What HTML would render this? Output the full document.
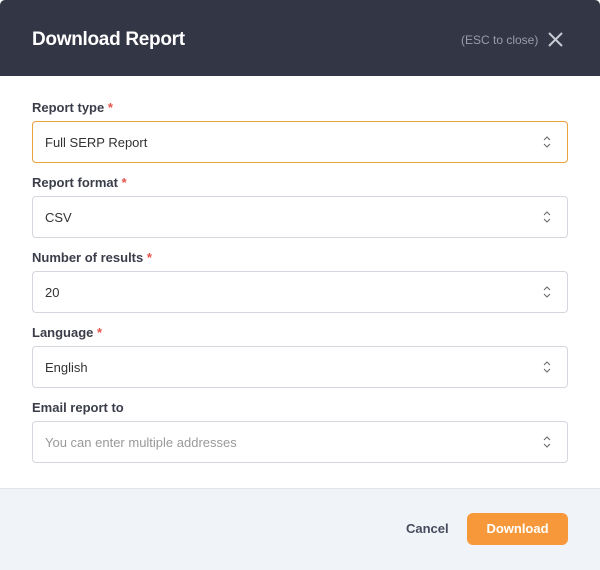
<!DOCTYPE html>
<html><head><style>
*{box-sizing:border-box;margin:0;padding:0}
body{width:600px;height:570px;background:#fff;font-family:"Liberation Sans",sans-serif;overflow:hidden;position:relative}
.hd{position:absolute;left:0;top:0;width:600px;height:76px;background:#333645;border-radius:5px 5px 0 0}
.hd h1{position:absolute;left:32px;top:29px;font-size:19px;font-weight:bold;color:#fff;letter-spacing:-0.3px}
.esc{position:absolute;left:461px;top:33px;font-size:12px;color:#9a9ca8}
.x{position:absolute;left:547px;top:31px}
.lbl{position:absolute;left:32px;font-size:13px;font-weight:bold;color:#3b3e4a}
.lbl span{color:#e5534b}
.f{position:absolute;left:32px;width:536px;height:42px;border:1px solid #d4d7dd;border-radius:4px;font-size:13px;color:#333;padding:13px 12px}
.f.a{border-color:#e8a33d}
.f.p{color:#999}
.f svg{position:absolute;right:16px;top:14px}
.ft{position:absolute;left:0;top:488px;width:600px;height:82px;background:#f0f3f7;border-top:1px solid #e2e5ea}
.cn{position:absolute;left:406px;top:521px;font-size:13px;font-weight:bold;color:#464b5e}
.dl{position:absolute;left:467px;top:513px;width:101px;height:32px;background:#f7993a;border-radius:6px;color:#fff;font-size:13px;font-weight:bold;text-align:center;line-height:32px}
</style></head><body>
<div class="hd"><h1>Download Report</h1><div class="esc">(ESC to close)</div>
<svg class="x" width="17" height="17" viewBox="0 0 17 17"><path d="M2 2L15 15M15 2L2 15" stroke="#c9cbd3" stroke-width="2"/></svg></div>

<div class="lbl" style="top:100px">Report type <span>*</span></div>
<div class="f a" style="top:121px">Full SERP Report<svg width="8" height="12" viewBox="0 0 8 12"><path d="M1 4L4 1L7 4M1 8L4 11L7 8" stroke="#666" fill="none"/></svg></div>
<div class="lbl" style="top:175px">Report format <span>*</span></div>
<div class="f" style="top:196px">CSV<svg width="8" height="12" viewBox="0 0 8 12"><path d="M1 4L4 1L7 4M1 8L4 11L7 8" stroke="#666" fill="none"/></svg></div>
<div class="lbl" style="top:250px">Number of results <span>*</span></div>
<div class="f" style="top:271px">20<svg width="8" height="12" viewBox="0 0 8 12"><path d="M1 4L4 1L7 4M1 8L4 11L7 8" stroke="#666" fill="none"/></svg></div>
<div class="lbl" style="top:325px">Language <span>*</span></div>
<div class="f" style="top:346px">English<svg width="8" height="12" viewBox="0 0 8 12"><path d="M1 4L4 1L7 4M1 8L4 11L7 8" stroke="#666" fill="none"/></svg></div>
<div class="lbl" style="top:400px">Email report to</div>
<div class="f p" style="top:421px">You can enter multiple addresses<svg width="8" height="12" viewBox="0 0 8 12"><path d="M1 4L4 1L7 4M1 8L4 11L7 8" stroke="#666" fill="none"/></svg></div>

<div class="ft"></div>
<div class="cn">Cancel</div>
<div class="dl">Download</div>
</body></html>
